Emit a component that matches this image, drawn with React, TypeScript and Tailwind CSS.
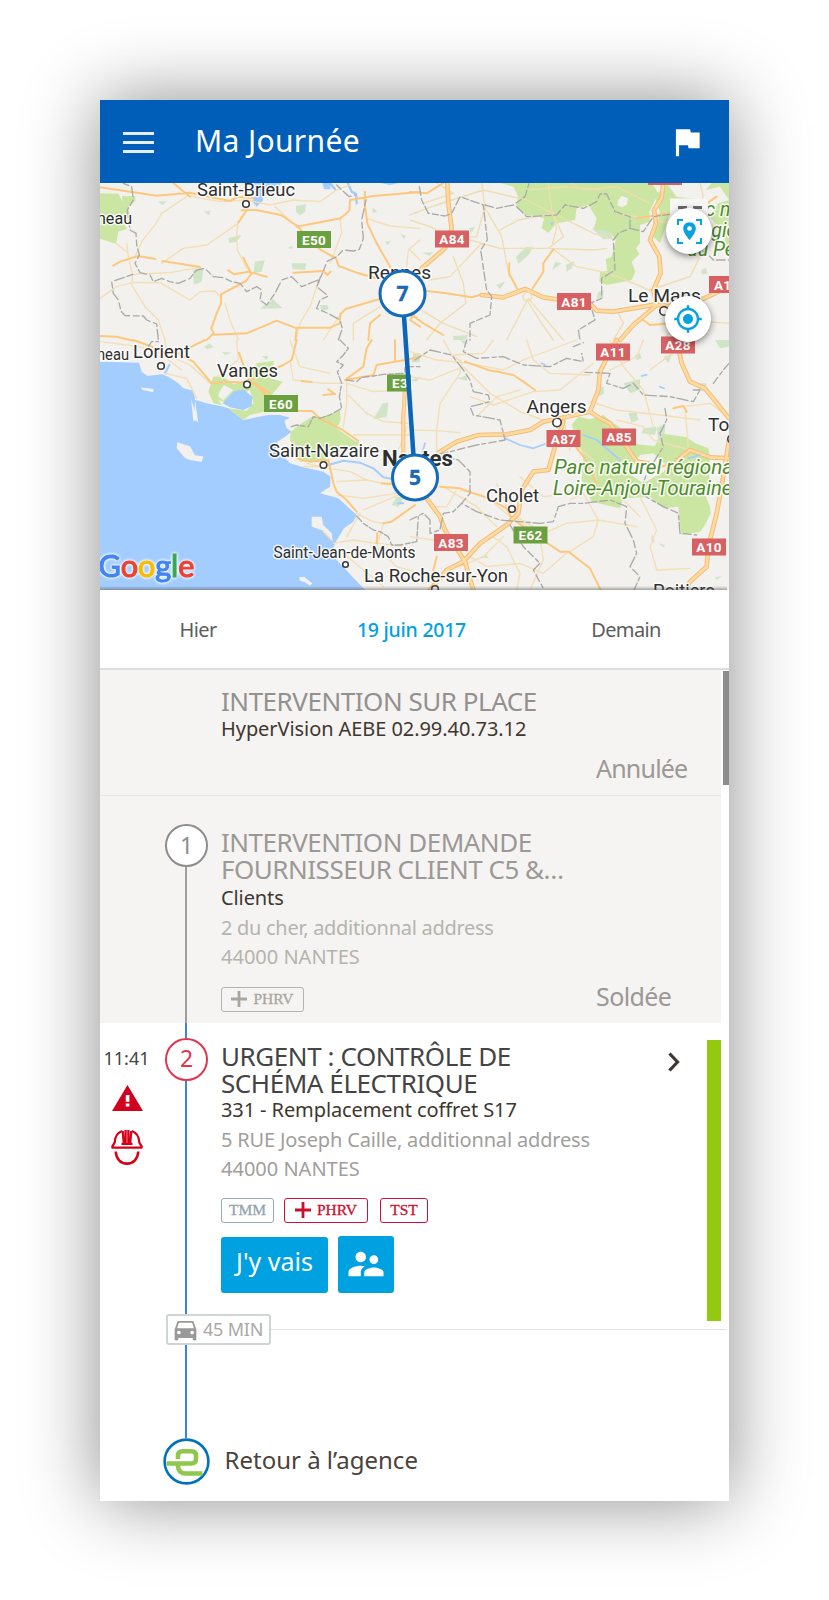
import React from 'react';
import { MdDirectionsCar, MdFlag, MdMyLocation, MdSupervisorAccount } from 'react-icons/md';

type Label = { t: string; x: number; y: number; w?: number; s?: number; b?: boolean; c?: string; i?: boolean };

const labels: Label[] = [
  { t: 'Saint-Brieuc', x: 197, y: 196, w: 98 },
  { t: 'neau', x: 97, y: 223.5, w: 35, s: 17 },
  { t: 'Rennes', x: 368, y: 279, w: 63 },
  { t: 'Lorient', x: 133, y: 358, w: 57 },
  { t: 'neau', x: 97, y: 360, w: 32, s: 16.5 },
  { t: 'Vannes', x: 217, y: 376.5, w: 61 },
  { t: 'Saint-Nazaire', x: 269, y: 457, w: 110, s: 18.5 },
  { t: 'Nantes', x: 382, y: 466, w: 71, s: 22, b: true },
  { t: 'Le Mans', x: 628, y: 302, w: 73 },
  { t: 'Angers', x: 526.5, y: 413, w: 60 },
  { t: 'Cholet', x: 486, y: 501.5, w: 53 },
  { t: 'Saint-Jean-de-Monts', x: 273.5, y: 557.5, w: 142, s: 16 },
  { t: 'La Roche-sur-Yon', x: 364, y: 582, w: 144, s: 19 },
  { t: 'Tours', x: 708, y: 430.5 },
  { t: 'Poitiers', x: 653, y: 597, w: 62 },
  { t: 'Parc naturel régional', x: 554, y: 474, w: 184, s: 19.5, c: '#4d8a2b', i: true },
  { t: 'Loire-Anjou-Touraine', x: 553, y: 494.5, w: 179, s: 19.5, c: '#4d8a2b', i: true },
  { t: 'Parc naturel', x: 677, y: 216, s: 19.5, c: '#4d8a2b', i: true },
  { t: 'régional', x: 695, y: 236.5, s: 19.5, c: '#4d8a2b', i: true },
  { t: 'du Perche', x: 687, y: 256, s: 19.5, c: '#4d8a2b', i: true },
];

const shields: [string, number, number, string][] = [
  ['E50', 297, 231, '#6ba040'],
  ['E60', 264, 395, '#6ba040'],
  ['E3', 387, 374.5, '#6ba040'],
  ['E62', 513.5, 526.5, '#6ba040'],
  ['A84', 435, 230.5, '#d96062'],
  ['A81', 557, 293, '#d96062'],
  ['A1', 709, 276, '#d96062'],
  ['A11', 596, 343.5, '#d96062'],
  ['A28', 661, 336.5, '#d96062'],
  ['A87', 546.5, 430, '#d96062'],
  ['A85', 602, 428.5, '#d96062'],
  ['A83', 434, 534, '#d96062'],
  ['A10', 692, 538.5, '#d96062'],
];

const towns: [number, number, number][] = [
  [246, 204, 3.3], [161, 366, 3.3], [247, 384.5, 3.3], [323.5, 465, 3.3], [557, 422.5, 4.2],
  [512, 509, 3.3], [345.5, 564.5, 2.8], [435, 589, 3.3], [664, 311, 4.2], [732, 439, 4.2],
];

function RegionMap() {
  return (
    <svg className="block h-[407px] w-[629px]" viewBox="100 183 629 407">
      <rect x="100" y="183" width="629" height="407" fill="#f2f1ed" />

      {/* north-west */}
      <g transform="translate(90 90) scale(.33333)" fill="none" strokeLinejoin="round" strokeLinecap="round">
        <g fill="#cbe6a3">
          <path d="M30 310L85 311L98 335L96 318L136 319L136 333L114 352L120 375L102 400L111 418L86 424L78 461L30 446Z" />
          <path fill="#d0e4c8" d="M618 348L648 343L645 365L630 376L618 366ZM415 445L455 434L440 455L418 459ZM495 515L524 511L515 545L490 550ZM605 520L648 520L645 540L608 536ZM308 540L340 535L335 575L312 584ZM510 656L548 627L578 655ZM342 365L360 362L358 377ZM203 335L230 333L218 345ZM690 645L712 645L716 658L695 662ZM590 475L607 467L607 476ZM885 455L903 453L893 465ZM930 432L948 438L943 447ZM848 352L862 366L848 368Z" />
        </g>
        <path fill="#a3ccff" d="M480 279L575 279L545 310L515 315L520 330L500 350L487 335L498 308ZM697 279L723 279L720 298L702 297ZM872 279H925L900 285Z" />
        <path stroke="#a3ccff" strokeWidth="7" d="M722 282L735 298M774 280L785 305L798 312L800 340" />
        <g stroke="#f4deb4" strokeWidth="4">
          <path d="M290 320L215 370L195 405L155 455L135 500M300 318L390 335L470 330L540 345L610 330L690 335L740 300L780 285M445 395L440 430L442 480L470 535M445 400L350 465L280 475L215 520M110 460L115 500L128 555L125 585L165 650L205 690L225 750M78 460L110 485M30 625L80 590L130 577L210 578L300 630L330 605L375 603L395 625M405 640L420 690L445 750M690 560L660 650L630 700L618 750M750 385L755 430L720 520M620 410L555 350M830 385L900 408L990 415M128 553L240 548L330 532M870 650L790 700L790 750M950 530L955 480L990 450M750 675L700 750" />
        </g>
        <g stroke="#fdc87e" strokeWidth="6">
          <path d="M30 292L120 305L200 317L300 308L420 333L445 320L490 325M250 279L300 320M455 361L500 360L575 376L622 408L650 440L690 478L738 505L746 528L800 548L860 565M470 361L445 397M620 410L752 385L778 362L780 330L850 318L990 306M825 305L824 340L832 400L860 460L902 533M70 527L90 515L145 498L196 507M217 513L330 531M415 541L432 553L475 545L530 560M460 503L484 552L468 573L393 613L393 640L380 670L364 715L371 730L350 750M610 548L700 543L712 555L722 545M371 734L470 730L560 692L615 713L720 713L749 700L751 673L768 656L880 624M30 738L80 740L130 752M620 715L616 750M870 675L840 700L835 750M980 660L960 690L990 710" />
        </g>
        <g stroke="#aaa" strokeWidth="4" strokeDasharray="18 9 30 11">
          <path d="M100 280L125 290L130 330L112 360L120 420L138 430L140 465L148 495L135 520L150 548L180 555L190 575L215 565L240 575L265 580L300 565L320 540L345 535L370 560L400 563L425 575L450 580L470 605L500 590L515 600L510 630L530 645L555 610L575 570L605 560L635 590L690 568L680 590L715 618L690 630L680 655L720 673L750 690L757 715L745 750M128 553L65 575L70 610L85 630L93 663L105 677L160 678L170 690L200 702L205 750M740 285L755 300L778 320L795 315M828 330L815 390L820 445L808 478L790 483L760 480L740 500L710 515L700 545L680 585" />
        </g>
      </g>

      {/* north-east */}
      <g transform="translate(410 90) scale(.33333)" fill="none" strokeLinejoin="round" strokeLinecap="round">
        <path fill="#cbe6a3" d="M270 279L725 279L745 310L718 365L720 395L690 405L690 460L678 475L688 492L665 515L676 545L665 570L590 585L568 575L570 545L592 543L587 508L605 500L618 450L600 428L575 430L550 420L560 385L535 345L500 355L495 390L440 400L415 428L395 415L402 385L375 378L345 375L318 350L325 320L310 290ZM770 279L800 320L890 330L905 345L850 370L780 370L750 460L730 440L750 370L735 320ZM888 300L905 279L957 279L957 500L940 430L900 380L925 340L957 330L930 290Z" />
        <path fill="#f2f1ed" d="M625 330L635 318L655 325L650 345L635 352L622 345Z" />
        <path fill="#d0e4c8" d="M318 500L350 470L370 472L355 495L325 522ZM435 515L455 520L428 540ZM468 525L493 513L485 535L470 545ZM35 488L70 487L60 497ZM545 413L600 425L608 445L580 448ZM176 415L195 410L185 430ZM258 585L285 575L270 597ZM875 540L888 533L892 552L875 553ZM130 738L175 735L165 750H130ZM565 605L580 602L580 625L560 625ZM8 370L18 363L20 373Z" />
        <g stroke="#f0ddb0" strokeWidth="4">
          <path d="M0 375L80 345L220 300L350 330L440 375L550 430L620 450M215 340L235 370L275 440L290 520L298 560M270 420L325 390L430 370L440 415L425 470M180 450L270 475L415 475L550 480L590 475M0 390L60 410L130 445L200 440L225 350L215 279M130 500L160 580L168 640L90 700L50 750M215 460L120 560L60 570M430 478L500 530L600 550L740 610M415 279L425 360L460 440L415 475M352 630L290 750M352 632L395 700L430 750M355 625L460 750M610 750L640 700L620 660M740 390L850 420L957 400M860 500L870 420M740 610L830 690L957 700M870 279L880 320L820 390M480 279L520 300L620 290L720 340M360 300L460 290L570 300M0 640L100 700L200 740M80 279L130 310L40 340M800 700L760 750M0 480L30 510M620 370L680 380M720 600L840 560L870 500" />
        </g>
        <g stroke="#fdc87e" strokeWidth="6">
          <path d="M0 306L50 310L100 279M50 603L110 610L185 622L220 612M298 520L297 550L322 597M368 595L400 545L400 520L430 478M680 385L780 370L860 360L920 320M0 670L40 700L100 735M440 628L520 635M700 690L720 705L780 700" />
        </g>
        <g stroke="#f2bd78" strokeWidth="14"><path d="M112 279L115 340L125 415L105 475L35 535M215 615L280 622L345 597L400 622L455 630L540 640L560 662L610 665L740 643L730 600L752 550L748 500L720 450L738 400L732 360L755 325L760 279M740 645L670 705L630 750M740 645L830 650L957 590" /></g>
        <g stroke="#ffdaa0" strokeWidth="8"><path d="M112 279L115 340L125 415L105 475L35 535M215 615L280 622L345 597L400 622L455 630L540 640L560 662L610 665L740 643L730 600L752 550L748 500L720 450L738 400L732 360L755 325L760 279M740 645L670 705L630 750M740 645L830 650L957 590" /></g>
        <circle cx="352" cy="620" r="13" stroke="#f0ddb0" strokeWidth="4" />
        <path fill="#a3ccff" d="M420 400L433 394L426 408Z" />
        <g stroke="#aaa" strokeWidth="4" strokeDasharray="26 10 18 8">
          <path d="M28 290L35 330L55 370L105 378L125 370L150 320L220 345L225 390L232 450L212 480L230 600L245 620L240 675L180 700L180 750M225 345L260 355L310 345L345 320L357 280M320 350L350 380L440 375L465 345L520 355L560 335L570 312L590 312L615 365L660 380L660 415L625 430L610 450L615 540L575 565L575 625L540 640L555 690L505 720L510 750M660 415L700 425L730 380L800 370L860 350M820 440L850 465L890 490L910 510L957 510" />
        </g>
      </g>

      {/* south-west coast */}
      <g transform="translate(90 340) scale(.33333)" fill="none" strokeLinejoin="round" strokeLinecap="round">
        <path fill="#a3ccff" d="M30 65L147 68L155 95L172 108L215 103L235 110L265 130L280 145L310 152L315 175L312 235L325 248L315 180L350 190L400 200L415 205L460 240L535 225L570 225L600 233L583 242L590 265L605 275L583 292L562 305L560 330L600 370L640 382L700 395L722 410L720 440L690 460L745 475L800 525L790 545L762 565L735 610L728 630L740 660L825 750L30 750Z" />
        <path fill="#f2f1ed" d="M153 142L190 147L190 157L157 150ZM262 307L300 319L315 346L340 349L335 366L300 360L285 354L260 325ZM665 530L695 530L700 555L725 580L728 605L700 572L665 560ZM627 712L642 710L667 730L660 737L645 727L630 722ZM303 175L322 240L310 244Z" />
        <path fill="#cbe6a3" d="M370 110L400 110L430 133L470 120L500 70L552 62L540 115L578 125L545 165L523 215L480 225L460 240L415 205L470 212L490 190L480 150L460 160L430 195L385 180L395 195L370 190L355 155ZM620 260L665 230L700 230L750 210L752 240L740 265L790 300L820 315L770 320L715 345L700 365L630 365L600 300L602 275Z" />
        <path fill="#a3ccff" d="M398 190L430 155L460 148L487 170L485 198L460 210L420 202Z" />
        <path fill="#f2f1ed" d="M388 155L402 135L430 150L400 180L385 170Z" />
        <path fill="#d0e4c8" d="M850 238L878 190L895 188L890 230ZM343 20L360 10L370 22L350 28ZM515 48H535L530 60ZM395 35L425 38L405 45ZM905 495L920 470L945 470L925 500ZM970 40H990V65L965 68Z" />
        <path stroke="#a3ccff" strokeWidth="6" d="M715 375L760 362L810 368L850 385L880 412L910 418M225 100L238 75M925 490H940" />
        <g stroke="#f4deb4" strokeWidth="4">
          <path d="M225 0L235 60L275 90M440 0L445 60L380 110M30 5L150 20L230 45L300 75L360 130M600 60L610 120L700 130L760 130M770 130L850 155L950 150M770 125L770 190L760 260M775 165L830 220L880 245L960 250M790 285L960 285M600 0L630 80L720 100M225 100L290 115L320 175M650 370L690 380L640 380M715 385L780 395L830 420L900 435M740 425L830 420M745 465L820 475L950 455M730 610L790 600L860 610L950 620M800 520L850 545L880 550M810 520L770 590M820 510L950 455M880 550L860 620L920 680L990 700M895 370L930 320L950 260M700 575L725 600M760 640L820 690L880 740" />
        </g>
        <g stroke="#fdc87e" strokeWidth="6">
          <path d="M130 0L180 18L220 35L260 38L310 65L365 130L410 125L495 130L540 160M300 22L345 0M225 40L210 50M447 38L460 75L480 120L580 75L605 60L620 0M495 133L530 165M580 190L620 212L665 213L690 235L755 268L805 303M635 123L665 126M715 148L735 162L700 165M765 120L820 80L830 25L845 0M768 120L850 105L860 75L945 60L990 50M620 355L660 365L715 360L730 430L740 455L770 480L800 515M875 430L910 432M905 545L975 495M860 610L862 580M935 250L945 160M880 550L905 545M915 0L915 60" />
        </g>
        <path stroke="#f2bd78" strokeWidth="12" d="M945 145L940 230L940 340" />
        <path stroke="#ffdaa0" strokeWidth="7" d="M945 145L940 230L940 340" />
        <g stroke="#aaa" strokeWidth="4" strokeDasharray="22 9 14 6">
          <path d="M750 0L775 25L760 45L740 65L760 75L742 95L755 130L748 170L755 205L720 225L690 235L670 230L655 260L620 255L598 262M770 120L800 125L815 112L850 108L880 103L945 100L945 80L990 80M800 528L820 550L850 570L870 575L895 590L905 615L930 615L980 605L985 530M175 20L185 5L205 5" />
        </g>
      </g>

      {/* south-east */}
      <g transform="translate(410 340) scale(.33333)" fill="none" strokeLinejoin="round" strokeLinecap="round">
        <path fill="#cbe6a3" d="M485 255L505 230L540 238L580 225L605 245L640 270L665 310L700 315L735 318L752 280L830 292L855 310L895 325L900 350L895 400L905 435L880 450L900 500L902 520L885 555L870 575L815 585L808 540L805 500L760 505L720 470L640 475L630 505L545 485L515 420L520 350Z" />
        <path fill="#f2f1ed" d="M690 345L730 340L780 385L700 430L655 400Z" />
        <path fill="#d0e4c8" d="M640 130L690 118L690 150L660 160ZM560 145L580 140L582 160L565 170ZM655 220L680 218L685 240L665 248ZM700 265L740 260L735 285L695 280ZM740 265L765 250L765 275L745 310ZM675 45L690 40L695 55L680 60ZM140 115L175 105L170 122ZM725 580L735 605L725 608ZM745 610L765 615L760 622ZM760 50L785 45L775 70ZM210 652L230 645L235 655ZM150 0L175 5L165 15ZM0 120L30 112L20 125ZM915 0H957V20L930 25ZM870 130H890L885 155L865 150ZM915 712L935 708L920 720Z" />
        <g stroke="#f4deb4" strokeWidth="4">
          <path d="M0 35L80 60L180 70L280 90L340 60L420 30L500 0M100 0L125 45L155 65L150 100L90 190L80 270L80 330M160 80L240 160L330 215L400 240M0 270L80 272L150 278M180 170L250 195L370 155L450 150L550 70M200 230L260 170L330 150M250 0L220 40L130 45M350 0L370 60L420 100L540 105M540 185L620 210L750 225L870 240M620 240L700 260L730 300L840 330M600 0L640 80L700 150L730 260M700 0L680 50L600 90M800 30L720 90M820 200L900 190L940 220M825 205L835 320M540 215L600 260M460 285L550 360L560 430M460 230L480 330M150 450L230 470L300 530M260 430L290 500M330 410L400 470L450 465M320 530L400 580L470 550L565 540L680 560M480 480L520 460L565 540L550 590L480 635M320 535L390 590L400 660L360 750M250 590L290 620L330 700L320 750M180 650L230 680L330 670L400 700L470 640M740 570L720 620L740 690L840 685M680 450L740 570M100 440L200 500L260 560M150 680L220 650L280 590M60 500L110 500L140 450M0 590L70 600M640 480L690 530M930 430L957 450M0 110L60 120L160 80" />
        </g>
        <g stroke="#fdc87e" strokeWidth="6">
          <path d="M165 65L235 90L310 105L340 125L375 150M90 440L150 445L235 475L290 505L305 535L405 605L450 635L475 635L540 685L572 750M80 650L70 690L80 730M485 305L520 350L560 430M790 205L820 198L830 215M720 390L790 370L825 335M400 240L450 240" />
        </g>
        <g stroke="#f2bd78" strokeWidth="14"><path d="M50 475L90 530L105 570L165 665L190 750M85 338L140 305L205 285L290 283L360 270L400 245L450 235L540 215L565 150L570 95L590 55L620 0M460 245L435 320L415 390L370 395L335 450L325 520L290 555L210 610L160 665L110 690L60 750M540 215L570 235L600 250L650 320L680 365L715 370M770 395L815 350L840 330L900 352L957 355M800 0L815 70L840 125L885 145L957 235M957 300L935 440L920 520L895 620L890 680L840 725L825 750" /></g>
        <g stroke="#ffdaa0" strokeWidth="8"><path d="M50 475L90 530L105 570L165 665L190 750M85 338L140 305L205 285L290 283L360 270L400 245L450 235L540 215L565 150L570 95L590 55L620 0M460 245L435 320L415 390L370 395L335 450L325 520L290 555L210 610L160 665L110 690L60 750M540 215L570 235L600 250L650 320L680 365L715 370M770 395L815 350L840 330L900 352L957 355M800 0L815 70L840 125L885 145L957 235M957 300L935 440L920 520L895 620L890 680L840 725L825 750" /></g>
        <path stroke="#a3ccff" strokeWidth="5" d="M285 295L330 315L370 325L405 312M520 285L560 300L630 360M395 70L405 75M695 108L710 104M750 140L762 145M835 355L870 345M45 310L35 345" />
        <g stroke="#aaa" strokeWidth="4" strokeDasharray="22 10 12 8 34 10">
          <path d="M15 60L60 30L125 45L160 90L180 120L190 155L235 165L240 185L180 200L190 225L270 240L285 300L200 315L80 345L145 360L180 395L180 460L155 490L200 515L270 540L390 550L430 545L445 500L480 490L520 490L600 480L650 500L645 550L670 600L680 640L660 680L690 710L672 750M170 0L160 35L200 55L280 50L340 75L420 80L470 55L520 65L515 40M525 97L600 100L590 130L640 145L670 130L700 165L780 170L850 185L870 150M765 205L770 240L750 280L760 320L710 400L690 460L760 500L805 520L810 580L860 585M870 150L850 150M910 130L940 90L957 70M0 540L40 520L60 540L60 580L90 570L100 520L130 515L155 490M300 555L340 620L390 670L370 690L400 745M490 20L520 8" />
        </g>
      </g>

      <rect x="648" y="178" width="34" height="7" fill="#d96062" />

      {towns.map(([x, y, r], k) => (
        <circle key={k} cx={x} cy={y} r={r} fill="#fff" stroke="#3c3c3c" strokeWidth="1.6" />
      ))}
      <g fontFamily="Roboto, 'Liberation Sans', sans-serif">
        {labels.map((l, k) => (
          <text
            key={k}
            x={l.x}
            y={l.y}
            fontSize={l.s ?? 19}
            fontWeight={l.b ? 700 : 400}
            fontStyle={l.i ? 'italic' : 'normal'}
            fill={l.c ?? '#2f2f2f'}
            stroke="#fff"
            strokeOpacity=".85"
            strokeWidth="3"
            strokeLinejoin="round"
            paintOrder="stroke"
            textLength={l.w}
            lengthAdjust="spacingAndGlyphs"
          >
            {l.t}
          </text>
        ))}
        {shields.map(([t, x, y, c]) => (
          <g key={t}>
            <rect x={x} y={y} width={t === 'E3' ? 24 : 34} height="17" fill={c} />
            <text x={t.length < 3 ? x + 5 : x + 17} y={y + 13.5} fontSize="13.500" fontWeight="700" fill="#fff" textAnchor={t.length < 3 ? 'start' : 'middle'} letterSpacing=".3">
              {t}
            </text>
          </g>
        ))}
      </g>
      {/* disabled fullscreen control, half covered by the round button */}
      <rect x="670" y="198.500" width="38" height="24" fill="#f6f6f4" />
      <path fill="#6b6b6b" d="M678 206h9v3h-9zM693 206h9v3h-9z" />

      <text
        x="98.500"
        y="577"
        fontFamily="Lato, sans-serif"
        fontSize="30"
        textLength="96"
        lengthAdjust="spacingAndGlyphs"
        strokeWidth="1.200"
        className="[filter:drop-shadow(0_0_1px_#fff)_drop-shadow(0_0_1.5px_#fff)]"
      >
        <tspan fill="#4285f4" stroke="#4285f4">G</tspan>
        <tspan fill="#ea4335" stroke="#ea4335">o</tspan>
        <tspan fill="#fbbc05" stroke="#fbbc05">o</tspan>
        <tspan fill="#4285f4" stroke="#4285f4">g</tspan>
        <tspan fill="#34a853" stroke="#34a853">l</tspan>
        <tspan fill="#ea4335" stroke="#ea4335">e</tspan>
      </text>

      <path d="M402.500 294L415 478" stroke="#0b65b9" strokeWidth="4.500" />
      {[['7', 402.5, 293.5], ['5', 415, 477.5]].map(([n, x, y]) => (
        <g key={n}>
          <circle cx={x} cy={y} r="22.500" fill="#fff" stroke="#146abb" strokeWidth="3" />
          <text x={x} y={Number(y) + 7.5} textAnchor="middle" fontFamily="'Open Sans', sans-serif" fontSize="21" fontWeight="700" fill="#1b69b6" stroke="#1b69b6" strokeWidth=".4">
            {n}
          </text>
        </g>
      ))}
      <linearGradient id="edge" x1="0" y1="0" x2="0" y2="1">
        <stop offset="0" stopColor="#555" stopOpacity="0" />
        <stop offset="1" stopColor="#555" stopOpacity=".5" />
      </linearGradient>
      <rect x="100" y="586" width="627" height="4" fill="url(#edge)" />
    </svg>
  );
}

function FitMapIcon() {
  return (
    <svg className="size-[25px]" viewBox="0 0 25 25" fill="none" stroke="#0aa1df" strokeWidth="2">
      <path d="M1 6V1H6M19 1H24V6M24 19V24H19M6 24H1V19" />
      <path d="M12.500 3.300C8.700 3.300 6.200 6.100 6.200 9.700C6.200 14 12.500 21 12.500 21S18.800 14 18.800 9.700C18.800 6.100 16.300 3.300 12.500 3.300Z" fill="#0aa1df" stroke="none" />
      <circle cx="12.500" cy="9.500" r="2.300" fill="#fff" stroke="none" />
    </svg>
  );
}

function WarningIcon() {
  return (
    <svg className="h-[26px] w-[31px]" viewBox="0 0 31 26">
      <path d="M15.500 0L31 26H0Z" fill="#d0021f" />
      <path d="M13.800 10h3.600v6.800h-3.600zM13.800 18.600h3.600v3h-3.600z" fill="#fff" />
    </svg>
  );
}

function HelmetIcon() {
  return (
    <svg className="h-[36px] w-[32px]" viewBox="0 0 32 36" fill="none" stroke="#d80018" strokeWidth="2.300" strokeLinejoin="round">
      <path d="M11.200 2C6.500 3.500 4 7.500 3.700 13.500L1.400 17.300V18.700H30.600V17.300L28.300 13.500C28 7.500 25.500 3.500 20.800 2" />
      <path d="M10.500 14.800H21.500M11.700 2L12.800 14M20.300 2L19.200 14M14.600 1V14M17.400 1V14" />
      <path d="M4.700 22.500C5.200 29.800 9.500 34.600 16 34.600S26.800 29.800 27.300 22.500" strokeWidth="2.600" />
    </svg>
  );
}

function AgencyIcon() {
  return (
    <svg className="size-[47px]" viewBox="0 0 47 47" fill="none">
      <circle cx="23.500" cy="23.500" r="21.900" fill="#fff" stroke="#0072bb" strokeWidth="2.600" />
      <g stroke="#8fc84d" strokeWidth="4.600">
        <path d="M3.500 25.500H28.500Q33 25.500 33 20.500V17.500Q33 13.300 28.500 13.300H19.500Q15 13.300 15 17.500V21" />
        <path d="M15 25.500V28Q15.200 35.500 23 35.500H39.500" />
      </g>
    </svg>
  );
}

function PlusIcon() {
  return (
    <svg className="h-[16px] w-[16px]" viewBox="0 0 16 16" stroke="currentColor" strokeWidth="2.800">
      <path d="M8 0V16M0 8H16" />
    </svg>
  );
}

function Tag({ text, plus, className }: { text: string; plus?: boolean; className: string }) {
  return (
    <span className={`flex h-[25px] items-center justify-center gap-[6px] rounded-[3px] border-[1.5px] font-[Liberation_Serif,serif] text-[15.5px] leading-none ${className}`}>
      {plus && <PlusIcon />}
      <span className="[-webkit-text-stroke:0.3px_currentColor]">{text}</span>
    </span>
  );
}

export default function App() {
  return (
    <div className="h-[1600px] w-[829px] overflow-hidden bg-white px-[100px] pt-[100px] font-['Noto_Sans',sans-serif]">
      <main className="flex h-[1401px] w-[629px] flex-col bg-white shadow-[0_0_70px_rgba(0,0,0,0.45)]">
        <header className="flex h-[83px] shrink-0 items-center bg-[#005eb8] pl-[23px] pr-[22px] text-white">
          <div className="mt-[2px] flex w-[31px] flex-col gap-[6px]">
            <i className="h-[3px] bg-white/90" />
            <i className="h-[3px] bg-white/90" />
            <i className="h-[3px] bg-white/90" />
          </div>
          <h1 className="ml-[41px] flex-1 pb-[2px] text-[30px] leading-[40px] tracking-[0.35px]">Ma Journée</h1>
          <MdFlag className="mr-[1px] size-[38px]" />
        </header>

        <section className="relative h-[407px] shrink-0">
          <RegionMap />
          <button className="absolute left-[566px] top-[25px] flex size-[46px] items-center justify-center rounded-full bg-white shadow-[0_2px_7px_rgba(0,0,0,0.5)]">
            <FitMapIcon />
          </button>
          <button className="absolute left-[565px] top-[113px] flex size-[46px] items-center justify-center rounded-full bg-white text-[#0aa1df] shadow-[0_2px_7px_rgba(0,0,0,0.5)]">
            <MdMyLocation className="size-[30px]" />
          </button>
        </section>

        <nav className="grid h-[78px] shrink-0 grid-cols-[196px_231px_202px] items-center pt-[1px] text-center text-[20px] tracking-[-0.6px] text-[#5c5c5c]">
          <span>Hier</span>
          <span className="text-[19.5px] font-medium tracking-[-0.25px] text-[#00a1e4]">19 juin 2017</span>
          <span className="pr-[4px]">Demain</span>
        </nav>

        <section className="relative flex flex-1 flex-col border-t-2 border-[#dcdddd]">
          <i className="absolute right-0 top-[1px] h-[114px] w-[6px] bg-[#8d8d8d]" />

          <article className="mr-[8px] h-[126px] shrink-0 border-b-[1.5px] border-[#e6e5e4] bg-[#f5f4f2] pl-[121px] pt-[18px]">
            <h2 className="text-[26px] leading-[26.500px] tracking-[-0.47px] text-[#93908e]">INTERVENTION SUR PLACE</h2>
            <p className="mt-[1px] text-[20px] leading-[26.500px] tracking-[-0.07px] text-[#3f372f]">HyperVision AEBE 02.99.40.73.12</p>
            <p className="ml-[375px] mt-[10px] text-[25px] leading-[32px] tracking-[-0.8px] text-[#9b9896]">Annulée</p>
          </article>

          <article className="mr-[8px] flex h-[227px] shrink-0 bg-[#f5f4f2]">
            <div className="ml-[65px] flex w-[43px] flex-col items-center pt-[28px]">
              <span className="flex size-[43px] shrink-0 items-center justify-center rounded-full border-[2.500px] border-[#8d8d8d] bg-white text-[23px] text-[#8d8d8d]">1</span>
              <i className="mr-[1px] w-[2px] flex-1 bg-[#a09d9b]" />
            </div>
            <div className="ml-[13px] flex-1 pt-[33px]">
              <h2 className="text-[26px] leading-[26.500px] tracking-[-0.49px] text-[#9b9896]">INTERVENTION DEMANDE<br />FOURNISSEUR CLIENT C5 &…</h2>
              <p className="mt-[3px] text-[20px] leading-[26.500px] tracking-[-0.1px] text-[#3f372f]">Clients</p>
              <p className="mt-[1px] text-[20px] leading-[29.500px] text-[#b5b3ae]"><span className="tracking-[-0.29px]">2 du cher, additionnal address</span><br />44000 NANTES</p>
              <div className="mt-[9px] flex">
                <Tag text="PHRV" plus className="mt-[6px] w-[83px] border-[#b5b3ae] text-[#a9a6a2]" />
                <span className="ml-[292px] text-[25px] leading-[31px] tracking-[-0.6px] text-[#9b9896]">Soldée</span>
              </div>
            </div>
          </article>

          <article className="mr-[8px] flex h-[291px] shrink-0">
            <div className="flex w-[54px] flex-col items-center pt-[22px]">
              <time className="mr-[1px] text-[18px] leading-[26px] text-[#444]">11:41</time>
              <span className="mt-[14px]"><WarningIcon /></span>
              <span className="mt-[18px]"><HelmetIcon /></span>
            </div>
            <div className="ml-[11px] flex w-[43px] flex-col items-center">
              <i className="mr-[1px] h-[15px] w-[2px] bg-[#3c86cb]" />
              <span className="flex size-[43px] shrink-0 items-center justify-center rounded-full border-[2.500px] border-[#e0364f] pb-[2px] text-[23px] text-[#e0364f]">2</span>
              <i className="mr-[1px] w-[2px] flex-1 bg-[#3c86cb]" />
            </div>
            <div className="ml-[13px] flex-1 pt-[20px]">
              <h2 className="text-[26px] leading-[26.500px] tracking-[-0.43px] text-[#444]">URGENT : CONTRÔLE DE<br />SCHÉMA ÉLECTRIQUE</h2>
              <p className="mt-[1px] text-[20px] leading-[26.500px] tracking-[-0.1px] text-[#3f372f]">331 - Remplacement coffret S17</p>
              <p className="mt-[1px] text-[20px] leading-[29.500px] text-[#a19e9b]"><span className="tracking-[-0.16px]">5 RUE Joseph Caille, additionnal address</span><br />44000 NANTES</p>
              <div className="mt-[14px] flex">
                <Tag text="TMM" className="w-[53px] border-[#9aa8b2] text-[#93a2ad]" />
                <Tag text="PHRV" plus className="ml-[10px] w-[84px] border-[#d0103a] text-[#c8102e]" />
                <Tag text="TST" className="ml-[12px] w-[48px] border-[#d0103a] text-[#c8102e]" />
              </div>
              <div className="mt-[13px] flex items-end text-white">
                <button className="h-[56px] w-[107px] rounded-[3px] bg-[#00a1e1] pb-[5px] text-[25px]">J'y vais</button>
                <button className="ml-[10px] flex h-[57px] w-[56px] items-center justify-center rounded-[3px] bg-[#00a1e1]">
                  <MdSupervisorAccount className="size-[42px]" />
                </button>
              </div>
            </div>
            <svg className="mr-[27px] mt-[29px] h-[20px] w-[12px]" viewBox="0 0 12 20" fill="none" stroke="#3f372f" strokeWidth="3.200">
              <path d="M1.500 1.500L9.500 10L1.500 18.500" />
            </svg>
            <i className="mb-[-7px] mt-[17px] w-[14px] bg-[#93c90e]" />
          </article>

          <div className="ml-[66px] mr-[2px] flex h-[31px] shrink-0 items-center">
            <span className="flex h-[31px] w-[105px] items-center gap-[3px] rounded-[3px] border-2 border-[#cfd4d4] pl-[3px] text-[18px] text-[#aaa8a5]">
              <MdDirectionsCar className="size-[29px] shrink-0 text-[#999]" />
              <span className="whitespace-nowrap tracking-[-0.2px]">45 MIN</span>
            </span>
            <i className="h-[1.500px] flex-1 bg-[#e2e2e2]" />
          </div>

          <div className="ml-[62px] flex w-[47px] flex-col items-center">
            <i className="h-[93px] w-[2px] bg-[#3c86cb]" />
          </div>
          <div className="ml-[62.500px] flex items-center">
            <AgencyIcon />
            <span className="ml-[15px] pb-[3px] text-[24px] leading-[40px] text-[#4a423b]">Retour à l’agence</span>
          </div>
        </section>
      </main>
    </div>
  );
}
